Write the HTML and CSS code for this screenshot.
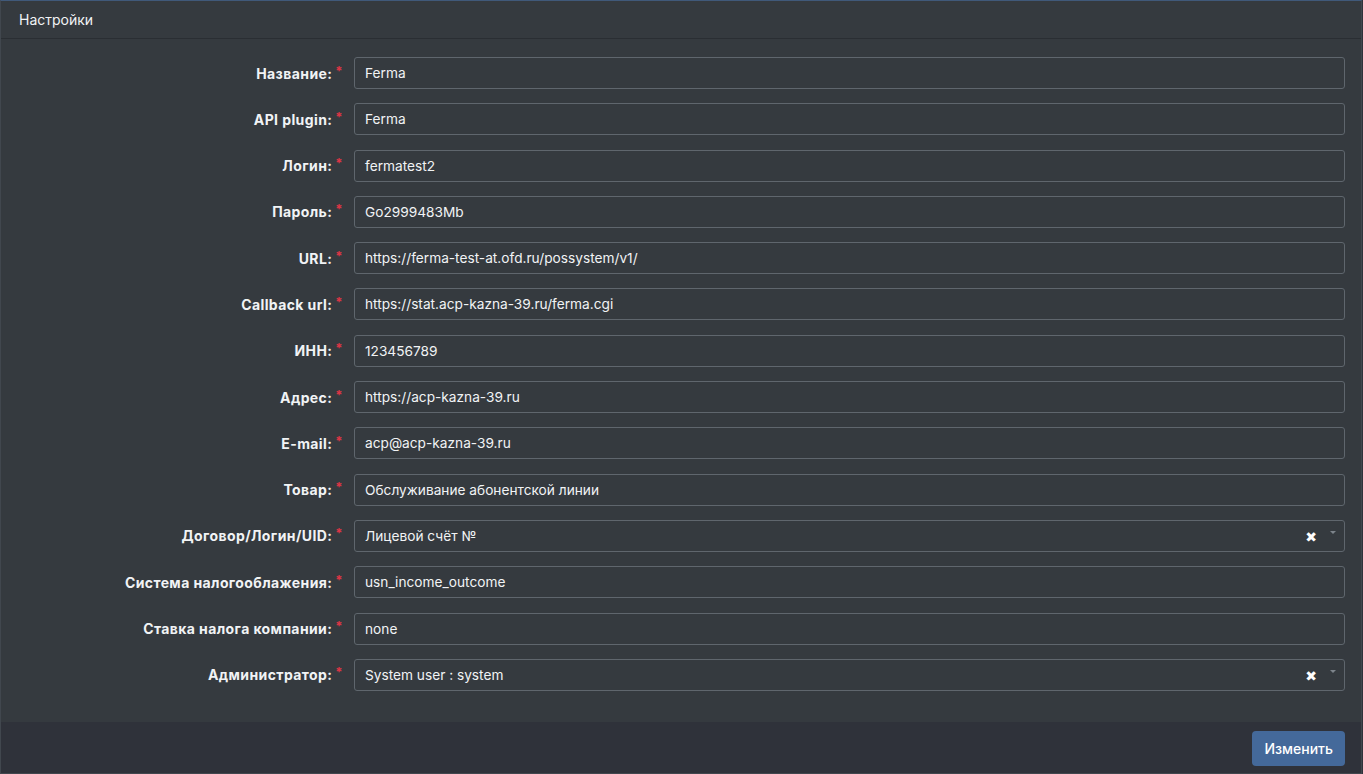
FILE: index.html
```html
<!DOCTYPE html>
<html lang="ru">
<head>
    <meta charset="UTF-8">
    <title>Настройки</title>
    <link rel="stylesheet" href="styles.css">
</head>
<body>
    <div class="panel">
        <div class="panel-heading">Настройки</div>

        <div class="panel-body">
            <div class="form-row">
                <label class="form-label">Название:<span class="req">*</span></label>
                <div class="form-control">Ferma</div>
            </div>
            <div class="form-row">
                <label class="form-label">API plugin:<span class="req">*</span></label>
                <div class="form-control">Ferma</div>
            </div>
            <div class="form-row">
                <label class="form-label">Логин:<span class="req">*</span></label>
                <div class="form-control">fermatest2</div>
            </div>
            <div class="form-row">
                <label class="form-label">Пароль:<span class="req">*</span></label>
                <div class="form-control">Go2999483Mb</div>
            </div>
            <div class="form-row">
                <label class="form-label">URL:<span class="req">*</span></label>
                <div class="form-control">https://ferma-test-at.ofd.ru/possystem/v1/</div>
            </div>
            <div class="form-row">
                <label class="form-label">Callback url:<span class="req">*</span></label>
                <div class="form-control">https://stat.acp-kazna-39.ru/ferma.cgi</div>
            </div>
            <div class="form-row">
                <label class="form-label">ИНН:<span class="req">*</span></label>
                <div class="form-control">123456789</div>
            </div>
            <div class="form-row">
                <label class="form-label">Адрес:<span class="req">*</span></label>
                <div class="form-control">https://acp-kazna-39.ru</div>
            </div>
            <div class="form-row">
                <label class="form-label">E-mail:<span class="req">*</span></label>
                <div class="form-control">acp@acp-kazna-39.ru</div>
            </div>
            <div class="form-row">
                <label class="form-label">Товар:<span class="req">*</span></label>
                <div class="form-control">Обслуживание абонентской линии</div>
            </div>
            <div class="form-row">
                <label class="form-label">Договор/Логин/UID:<span class="req">*</span></label>
                <div class="form-control select">
                    <span class="select-text">Лицевой счёт №</span>
                    <span class="select-clear">&#10006;</span>
                    <span class="select-caret"></span>
                </div>
            </div>
            <div class="form-row">
                <label class="form-label">Система налогооблажения:<span class="req">*</span></label>
                <div class="form-control">usn_income_outcome</div>
            </div>
            <div class="form-row">
                <label class="form-label">Ставка налога компании:<span class="req">*</span></label>
                <div class="form-control">none</div>
            </div>
            <div class="form-row">
                <label class="form-label">Администратор:<span class="req">*</span></label>
                <div class="form-control select">
                    <span class="select-text">System user : system</span>
                    <span class="select-clear">&#10006;</span>
                    <span class="select-caret"></span>
                </div>
            </div>
        </div>

        <div class="panel-footer">
            <button class="btn btn-primary">Изменить</button>
        </div>
    </div>
</body>
</html>
```

FILE: styles.css
```css
/* общая страница */
html, body {
    height: 100%;
}

body {
    margin: 0;
    background-color: #2f323a;
    font-family: Inter, "Liberation Sans", Arial, sans-serif;
    color: #e9ecef;
}

/* панель настроек */
.panel {
    min-height: 100%;
    display: flex;
    flex-direction: column;
    background-color: #353a3f;
    border: 1px solid #41474e;
    border-top: 1px solid #40597a;
    box-sizing: border-box;
    margin-right: 1px;
}

.panel-heading {
    height: 37px;
    padding: 0 18px;
    display: flex;
    align-items: center;
    font-size: 14px;
    color: #f1f3f5;
    border-bottom: 1px solid #2a2e33;
}

.panel-body {
    display: flex;
    flex-direction: column;
    gap: 14.3px;
    padding: 18px 16px 31px 0;
}

.form-row {
    display: flex;
    align-items: center;
}

.form-label {
    width: 342px;
    text-align: right;
    font-size: 14px;
    font-weight: 700;
    letter-spacing: 0.4px;
    color: #f1f3f5;
    margin-right: 11px;
}

.req {
    color: #dc3545;
    margin-left: 3px;
    font-size: 13px;
    position: relative;
    top: -3px;
}

.form-control {
    flex: 1;
    height: 32px;
    box-sizing: border-box;
    border: 1px solid #5f666d;
    border-radius: 3px;
    padding: 0 10px;
    display: flex;
    align-items: center;
    font-size: 13.7px;
    color: #f1f3f5;
    background-color: #353a3f;
}

/* выпадающий список */
.select-text {
    flex: 1;
}

.select-clear {
    font-family: "DejaVu Sans", sans-serif;
    font-size: 14px;
    font-weight: bold;
    color: #ffffff;
    margin-right: 13px;
    margin-top: 3px;
}

.select-caret {
    width: 0;
    height: 0;
    border-left: 3px solid transparent;
    border-right: 3px solid transparent;
    border-top: 3px solid #7d848b;
    margin-right: -2px;
    margin-top: -6px;
}

/* подвал */
.panel-footer {
    flex: 1;
    background-color: #2f323a;
    display: flex;
    justify-content: flex-end;
    align-items: flex-start;
    padding: 9px 16px 0 0;
}

.btn {
    border: none;
    border-radius: 4px;
    font-family: Inter, "Liberation Sans", Arial, sans-serif;
    font-size: 14px;
    font-weight: 500;
    cursor: pointer;
    padding: 0 12px;
    height: 35px;
}

.btn-primary {
    background-color: #44699a;
    color: #ffffff;
}

.btn-primary:hover {
    background-color: #3a5b86;
}
```
